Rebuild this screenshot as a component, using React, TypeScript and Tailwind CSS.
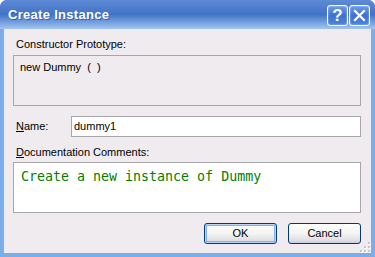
import React from 'react';

const ui = { fontFamily: '"Liberation Sans", Arial, sans-serif' };
const mono = { fontFamily: '"DejaVu Sans Mono", "Liberation Mono", monospace' };

const CaptionButton = ({ children }: { children: React.ReactNode }) => (
  <div className="w-[21px] h-[21px] rounded-[3px] border border-white flex items-center justify-center bg-gradient-to-b from-[#6c9be6] via-[#3f72d0] to-[#4c82e0] shadow-[inset_0_0_2px_rgba(255,255,255,0.6)]">
    {children}
  </div>
);

const XpButton = ({ label, isDefault }: { label: string; isDefault?: boolean }) => (
  <button
    className={`w-[73px] h-[21px] rounded-[3px] border border-[#003c74] text-[11px] text-black bg-gradient-to-b from-white via-[#f4f4f0] to-[#d6d7e4] ${
      isDefault ? 'shadow-[inset_0_0_0_1px_#bcd4f6,inset_0_0_0_2px_#89aded]' : 'shadow-[inset_0_-1px_1px_#c4c9dc]'
    }`}
    style={ui}
  >
    {label}
  </button>
);

export default function App() {
  return (
    <div className="w-[375px] h-[257px] flex flex-col rounded-t-[7px] overflow-hidden bg-[#4a7fd4]" style={ui}>
      {/* title bar */}
      <div className="h-[29px] shrink-0 flex items-center pl-[8px] pr-[5px] bg-gradient-to-b from-[#5e8ad6] via-[#4373c6] to-[#a2c6f0]">
        <span className="text-white font-bold text-[13px] tracking-[0.3px] [text-shadow:1px_1px_0_#3a5fa8] flex-1">
          Create Instance
        </span>
        <div className="flex gap-[1px] mt-[2px]">
          <CaptionButton>
            <span className="text-white font-bold text-[17px] leading-none">?</span>
          </CaptionButton>
          <CaptionButton>
            <svg width="13" height="13" viewBox="0 0 13 13">
              <path d="M2 2 L11 11 M11 2 L2 11" stroke="white" strokeWidth="2.2" strokeLinecap="square" />
            </svg>
          </CaptionButton>
        </div>
      </div>

      {/* client area */}
      <div className="flex-1 border-x-[4px] border-b-[4px] border-[#7aaeea]">
        <div className="h-full relative bg-[#efebef] pl-[9px] pr-[10px] pt-[9px] text-[11px] text-black flex flex-col">
          <div className="h-[17px] pl-[3px] leading-[13px]">Constructor Prototype:</div>
          <div className="h-[51px] border border-[#a7a6aa] pl-[6px] pt-[5px] leading-[13px]">new Dummy&nbsp;&nbsp;(&nbsp;&nbsp;)</div>

          <div className="flex items-center mt-[10px] h-[21px]">
            <span className="w-[58px] pl-[3px]">
              <span className="underline">N</span>ame:
            </span>
            <div className="flex-1 h-[21px] border border-[#a7a6aa] bg-white pl-[2px] flex items-center">dummy1</div>
          </div>

          <div className="mt-[9px] h-[16px] pl-[3px] leading-[13px]">
            <span className="underline">D</span>ocumentation Comments:
          </div>
          <div className="h-[51px] border border-[#a7a6aa] bg-white pl-[7px] pt-[5px] text-[13.3px] leading-[17px] text-[#008000]" style={mono}>
            Create a new instance of Dummy
          </div>

          <div className="flex justify-end gap-[11px] mt-[10px]">
            <XpButton label="OK" isDefault />
            <XpButton label="Cancel" />
          </div>

          {/* resize grip */}
          <svg className="absolute right-[0px] bottom-[0px]" width="12" height="12" viewBox="0 0 12 12">
            {[
              [10, 2], [10, 6], [6, 6], [10, 10], [6, 10], [2, 10],
            ].map(([x, y], i) => (
              <g key={i}>
                <rect x={x} y={y} width="2" height="2" fill="#ffffff" />
                <rect x={x - 1} y={y - 1} width="2" height="2" fill="#c8c4cc" />
              </g>
            ))}
          </svg>
        </div>
      </div>
    </div>
  );
}
